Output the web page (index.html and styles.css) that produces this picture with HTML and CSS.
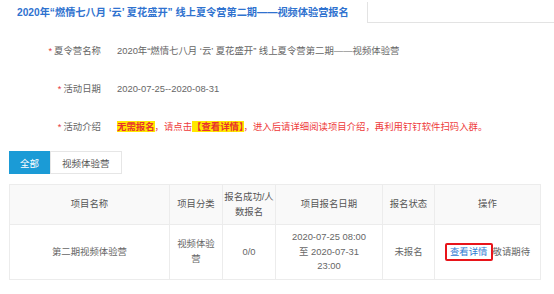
FILE: index.html
```html
<!DOCTYPE html>
<html lang="zh-CN">
<head>
    <meta charset="UTF-8">
    <meta name="viewport" content="width=device-width, initial-scale=1.0">
    <title>视频体验营报名</title>
    <link rel="stylesheet" href="styles.css">
</head>
<body>
    <!-- Page tab header -->
    <div class="page-tabs">
        <div class="page-tab">2020年“燃情七八月 ‘云’ 夏花盛开” 线上夏令营第二期——视频体验营报名</div>
        <div class="page-tab-rest"></div>
    </div>

    <!-- Camp info -->
    <div class="info">
        <div class="info-row">
            <div class="info-label"><span class="star">*</span>夏令营名称</div>
            <div class="info-value">2020年“燃情七八月 ‘云’ 夏花盛开” 线上夏令营第二期——视频体验营</div>
        </div>
        <div class="info-row">
            <div class="info-label"><span class="star">*</span>活动日期</div>
            <div class="info-value">2020-07-25--2020-08-31</div>
        </div>
        <div class="info-row">
            <div class="info-label"><span class="star">*</span>活动介绍</div>
            <div class="info-value notice"><span class="mark">无需报名</span>，请点击<span class="mark">【查看详情】</span>，进入后请详细阅读项目介绍，再利用钉钉软件扫码入群。</div>
        </div>
    </div>

    <!-- Filter -->
    <div class="filter">
        <button class="filter-btn active">全部</button>
        <button class="filter-btn">视频体验营</button>
    </div>

    <!-- Project list -->
    <table class="project-table">
        <colgroup>
            <col style="width: 160px">
            <col style="width: 53px">
            <col style="width: 53px">
            <col style="width: 107px">
            <col style="width: 52px">
            <col style="width: 106px">
        </colgroup>
        <thead>
            <tr>
                <th>项目名称</th>
                <th>项目分类</th>
                <th>报名成功/人数报名</th>
                <th>项目报名日期</th>
                <th>报名状态</th>
                <th>操作</th>
            </tr>
        </thead>
        <tbody>
            <tr>
                <td>第二期视频体验营</td>
                <td>视频体验营</td>
                <td>0/0</td>
                <td class="date-cell">2020-07-25 08:00 至 2020-07-31 23:00</td>
                <td>未报名</td>
                <td class="action-cell"><a href="#" class="detail-link">查看详情</a>敬请期待</td>
            </tr>
        </tbody>
    </table>
</body>
</html>
```
FILE: styles.css
```css
body {
    margin: 0;
    font-family: "Liberation Sans", "Noto Sans CJK SC", sans-serif;
    font-size: 9.4px;
    line-height: 14px;
    color: #666;
    background: #fff;
}

.page-tabs {
    display: flex;
    padding-top: 2px;
}

.page-tab {
    width: 350px;
    height: 21px;
    padding-left: 17px;
    border-right: 1px solid #e3e3e3;
    font-size: 10.2px;
    font-weight: bold;
    line-height: 21px;
    color: #2f72cf;
    white-space: nowrap;
}

.page-tab-rest {
    flex: 1;
    height: 20px;
    border-bottom: 1px solid #e3e3e3;
}

.info {
    padding-top: 9px;
}

.info-row {
    display: flex;
    align-items: center;
    height: 38px;
}

.info-label {
    width: 101px;
    padding-right: 16px;
    text-align: right;
    flex-shrink: 0;
}

.star {
    color: #e5383b;
    margin-right: 2px;
}

.info-value {
    white-space: nowrap;
}

.notice {
    color: #ee3a3a;
}

.mark {
    background: #ffe800;
    font-weight: bold;
    color: #e8312f;
}

.filter {
    display: flex;
    margin: 5px 0 0 9px;
}

.filter-btn {
    height: 23px;
    padding: 0 11px;
    border: 1px solid #e6e6e6;
    background: #fff;
    font-family: inherit;
    font-size: 9.5px;
    color: #555;
    cursor: pointer;
}

.filter-btn.active {
    background: #1b9bd6;
    border-color: #1b9bd6;
    color: #fff;
    padding: 0 10px;
}

.project-table {
    width: 531px;
    margin: 10px 0 0 9px;
    border-collapse: collapse;
    table-layout: fixed;
}

.project-table th,
.project-table td {
    border: 1px solid #ececec;
    text-align: center;
    vertical-align: middle;
    font-weight: normal;
    line-height: 14.5px;
}

.project-table th {
    background: #f9f9f9;
    padding: 5px 0;
    color: #555;
}

.project-table td {
    padding: 5px 4px;
}

.project-table .date-cell {
    padding: 5px 12px;
}

.action-cell {
    white-space: nowrap;
}

.detail-link {
    display: inline-block;
    padding: 0 3px;
    border: 2px solid #e8141a;
    border-radius: 2px;
    color: #2f7bd3;
    text-decoration: none;
    line-height: 14px;
}
```
